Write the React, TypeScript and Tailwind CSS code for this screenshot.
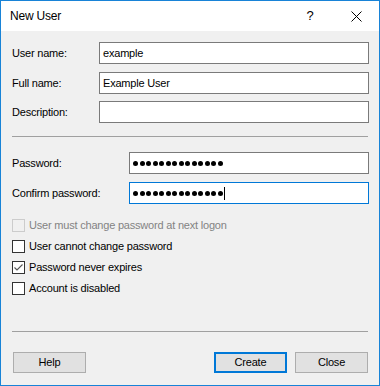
import React from "react";

const font = "font-['Liberation_Sans',Arial,sans-serif]";

function TextBox({ value, focused = false }: { value?: string; focused?: boolean }) {
  return (
    <div
      className={`h-[22px] flex-1 bg-white border flex items-center pl-[3px] ${focused ? "border-[#0078d7]" : "border-[#7a7a7a]"
        }`}
    >
      {value}
    </div>
  );
}

function PasswordBox({ count, focused = false }: { count: number; focused?: boolean }) {
  return (
    <div
      className={`h-[22px] flex-1 bg-white border flex items-center pl-[3px] ${focused ? "border-[#0078d7]" : "border-[#7a7a7a]"
        }`}
    >
      <div className="flex items-center gap-[1.5px]">
        {Array.from({ length: count }).map((_, i) => (
          <span key={i} className="w-[5px] h-[5px] rounded-full bg-black" />
        ))}
      </div>
      {focused && <span className="w-px h-[13px] bg-black ml-[1px]" />}
    </div>
  );
}

function CheckRow({ label, checked = false, disabled = false }: { label: string; checked?: boolean; disabled?: boolean }) {
  return (
    <div className="flex items-center h-[13px]">
      <div
        className={`w-[13px] h-[13px] border ${disabled ? "border-[#cccccc] bg-[#f0f0f0]" : "border-[#333333] bg-white"
          } flex items-center justify-center`}
      >
        {checked && (
          <svg width="11" height="11" viewBox="0 0 11 11">
            <polyline points="1.5,5.5 4,8 9.5,2.5" fill="none" stroke="#555555" strokeWidth="1.1" />
          </svg>
        )}
      </div>
      <span className={`ml-[4px] ${disabled ? "text-[#838383]" : "text-black"}`}>{label}</span>
    </div>
  );
}

export default function App() {
  return (
    <div className={`w-[380px] h-[386px] border border-[#1883d7] flex flex-col bg-[#f0f0f0] text-[11px] text-black ${font}`}>
      {/* title bar */}
      <div className="h-[30px] bg-white flex items-center shrink-0">
        <span className="pl-[9px] text-[12px] tracking-[-0.2px] flex-1">New User</span>
        <div className="w-[46px] h-full flex items-center justify-center text-[13px]">?</div>
        <div className="w-[46px] h-full flex items-center justify-center">
          <svg width="11" height="11" viewBox="0 0 11 11">
            <path d="M0.5 0.5 L10.5 10.5 M10.5 0.5 L0.5 10.5" stroke="#000" strokeWidth="1" />
          </svg>
        </div>
      </div>

      <div className="flex-1 flex flex-col pt-[11px] pl-[11px] pr-[10px] tracking-[-0.2px]">
        <div className="flex items-center">
          <span className="w-[87px]">User name:</span>
          <TextBox value="example" />
        </div>
        <div className="flex items-center mt-[8px]">
          <span className="w-[87px]">Full name:</span>
          <TextBox value="Example User" />
        </div>
        <div className="flex items-center mt-[7px]">
          <span className="w-[87px]">Description:</span>
          <TextBox />
        </div>

        <div className="mt-[13px] border-t border-[#a0a0a0] mr-[1px]" />

        <div className="flex items-center mt-[15px]">
          <span className="w-[117px]">Password:</span>
          <PasswordBox count={14} />
        </div>
        <div className="flex items-center mt-[8px]">
          <span className="w-[117px]">Confirm password:</span>
          <PasswordBox count={14} focused />
        </div>

        <div className="flex flex-col gap-[8px] mt-[15px]">
          <CheckRow label="User must change password at next logon" disabled />
          <CheckRow label="User cannot change password" />
          <CheckRow label="Password never expires" checked />
          <CheckRow label="Account is disabled" />
        </div>

        <div className="mt-[36px] border-t border-[#a0a0a0] mr-[1px]" />

        <div className="flex mt-[20px] pr-[1px]">
          <button className="ml-[1px] w-[73px] h-[21px] bg-[#e1e1e1] border border-[#adadad]">Help</button>
          <div className="flex-1" />
          <button className="w-[73px] h-[21px] bg-[#e1e1e1] border-2 border-[#0078d7]">Create</button>
          <button className="ml-[8px] w-[73px] h-[21px] bg-[#e1e1e1] border border-[#adadad]">Close</button>
        </div>
      </div>
    </div>
  );
}
